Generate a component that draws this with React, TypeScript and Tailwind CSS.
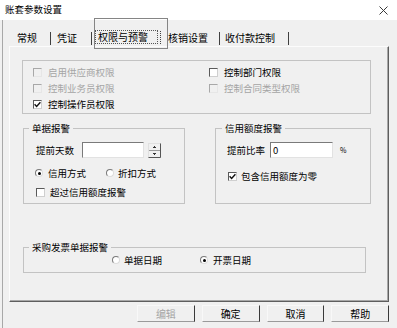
import React from "react";

function Check({ checked = false, disabled = false }: { checked?: boolean; disabled?: boolean }) {
  return (
    <span
      className={
        disabled
          ? "w-[9px] h-[9px] shrink-0 border border-t-[#a8a8a8] border-l-[#a8a8a8] border-r-[#e6e6e6] border-b-[#e6e6e6] bg-[#f0f0f0] flex items-center justify-center"
          : "w-[9px] h-[9px] shrink-0 border border-t-[#5a5a5a] border-l-[#5a5a5a] border-r-[#cfcfcf] border-b-[#cfcfcf] bg-white flex items-center justify-center"
      }
    >
      {checked && (
        <svg width="7" height="7" viewBox="0 0 7 7">
          <path d="M0.6 3.3 L2.6 5.4 L6.4 1.2" stroke="#111" strokeWidth="1.4" fill="none" />
        </svg>
      )}
    </span>
  );
}

function Radio({ checked = false }: { checked?: boolean }) {
  return (
    <span className="w-[8px] h-[8px] shrink-0 rounded-full border border-t-[#7a7a7a] border-l-[#7a7a7a] border-r-[#dcdcdc] border-b-[#dcdcdc] bg-white flex items-center justify-center">
      {checked && <span className="w-[3px] h-[3px] rounded-full bg-black" />}
    </span>
  );
}

function CheckRow({ label, checked, disabled }: { label: string; checked?: boolean; disabled?: boolean }) {
  return (
    <div className="h-[16px] flex items-center gap-[6px]">
      <Check checked={checked} disabled={disabled} />
      <span className={disabled ? "text-[#a5a5a5]" : "text-black"}>{label}</span>
    </div>
  );
}

function Btn({ label, disabled }: { label: string; disabled?: boolean }) {
  return (
    <div
      className={
        "w-[58px] h-[17px] flex items-center justify-center bg-[#f0f0f0] border border-t-[#f8f8f8] border-l-[#f8f8f8] border-r-[#3a3a3a] border-b-[#9a9a9a] text-[10px] leading-none " +
        (disabled ? "text-[#a5a5a5]" : "text-black")
      }
    >
      {label}
    </div>
  );
}

export default function App() {
  return (
    <div className="w-[397px] h-[328px] bg-[#f0f0f0] flex flex-col overflow-hidden font-['Noto_Sans_CJK_SC',sans-serif] text-black text-[9.5px] leading-[12px]">
      {/* title bar */}
      <div className="h-[20px] bg-white flex items-center justify-between pl-[5px] pr-[9px] shrink-0">
        <span className="text-[9.5px] leading-none">账套参数设置</span>
        <svg width="9" height="9" viewBox="0 0 9 9">
          <path d="M0.5 0.5L8.5 8.5M8.5 0.5L0.5 8.5" stroke="#3a3a3a" strokeWidth="1" />
        </svg>
      </div>

      <div className="flex-1 ml-[2px] border-l border-[#a8a8a8] flex flex-col pl-[6px] pr-[8px]">
        {/* tabs */}
        <div className="h-[26px] flex items-start text-[10px] leading-[12px] shrink-0">
          <div className="w-[42px] pl-[8px] pt-[12px] flex justify-between">
            <span>常规</span>
            <span className="w-px h-[13px] bg-[#404040]" />
          </div>
          <div className="w-[41px] pl-[6px] pt-[12px] flex justify-between">
            <span>凭证</span>
            <span className="w-px h-[13px] bg-[#404040]" />
          </div>
          <div className="w-[2px]" />
          <div className="relative z-10 w-[74px] h-[31px] -mt-[2px] border border-[#858585] flex items-start pt-[11px] pl-[0px]">
            <span className="w-[63px] h-[14px] border border-dotted border-[#555] pl-[2px] flex items-center">权限与预警</span>
            <span className="ml-[2px] mt-[1px] w-px h-[13px] border-l border-dotted border-[#404040]" />
          </div>
          <div className="w-[52px] pt-[12px] flex justify-between">
            <span>核销设置</span>
            <span className="w-px h-[13px] bg-[#404040]" />
          </div>
          <div className="w-[69px] pl-[5px] pt-[12px] flex justify-between">
            <span>收付款控制</span>
            <span className="w-px h-[13px] bg-[#404040]" />
          </div>
        </div>

        {/* panel */}
        <div className="h-[256px] w-[380px] border border-t-[#fcfcfc] border-l-[#fcfcfc] border-r-[#5e5e5e] border-b-[#5e5e5e] shadow-[inset_-1px_-1px_0_#a8a8a8] flex flex-col shrink-0">
          {/* group 1 */}
          <div className="ml-[12px] mt-[13px] w-[349px] h-[54px] border border-[#c3c3c3] grid grid-cols-[176px_1fr] pl-[10px] pt-[3px]">
            <div className="flex flex-col">
              <CheckRow label="启用供应商权限" disabled />
              <CheckRow label="控制业务员权限" disabled />
              <CheckRow label="控制操作员权限" checked />
            </div>
            <div className="flex flex-col">
              <CheckRow label="控制部门权限" />
              <CheckRow label="控制合同类型权限" disabled />
            </div>
          </div>

          {/* group 2 & 3 */}
          <div className="ml-[13px] mt-[8px] flex gap-[30px]">
            <fieldset className="w-[162px] h-[82px] border border-[#c3c3c3] flex flex-col">
              <legend className="ml-[5px] px-[3px] leading-[12px]">单据报警</legend>
              <div className="mt-[8px] pl-[12px] h-[16px] flex items-center">
                <span className="w-[38px]">提前天数</span>
                <span className="ml-[8px] w-[62px] h-[16px] bg-white border border-t-[#7a7a7a] border-l-[#7a7a7a] border-r-[#e2e2e2] border-b-[#e2e2e2]" />
                <svg className="ml-[4px]" width="13" height="15" viewBox="0 0 13 15">
                  <rect x="0.5" y="0.5" width="12" height="14" fill="#f0f0f0" stroke="#e0e0e0" />
                  <path d="M12.5 0.5V14.5H0.5" stroke="#555" fill="none" />
                  <path d="M1 7.5H12" stroke="#9a9a9a" />
                  <path d="M5 4.5H8" stroke="#333" />
                  <path d="M6 3.5H7" stroke="#333" />
                  <path d="M5 10.5H8" stroke="#333" />
                  <path d="M6 11.5H7" stroke="#333" />
                </svg>
              </div>
              <div className="mt-[7px] pl-[11px] h-[16px] flex items-center">
                <Radio checked />
                <span className="ml-[5px] w-[58px]">信用方式</span>
                <Radio />
                <span className="ml-[4px]">折扣方式</span>
              </div>
              <div className="mt-[3px] pl-[12px] h-[16px] flex items-center gap-[5px]">
                <Check />
                <span>超过信用额度报警</span>
              </div>
            </fieldset>

            <fieldset className="w-[156px] h-[82px] border border-[#c3c3c3] flex flex-col">
              <legend className="ml-[6px] px-[3px] leading-[12px]">信用额度报警</legend>
              <div className="mt-[8px] pl-[11px] h-[16px] flex items-center">
                <span className="w-[38px]">提前比率</span>
                <span className="ml-[5px] w-[63px] h-[16px] bg-white border border-t-[#7a7a7a] border-l-[#7a7a7a] border-r-[#e2e2e2] border-b-[#e2e2e2] pl-[2px] flex items-center">0</span>
                <span className="ml-[7px] text-[7px] leading-none">%</span>
              </div>
              <div className="mt-[10px] pl-[12px] h-[16px] flex items-center gap-[4px]">
                <Check checked />
                <span>包含信用额度为零</span>
              </div>
            </fieldset>
          </div>

          {/* group 4 */}
          <fieldset className="ml-[13px] mt-[37px] w-[343px] h-[32px] border border-[#c3c3c3] flex flex-col">
            <legend className="ml-[5px] px-[3px] leading-[12px]">采购发票单据报警</legend>
            <div className="pl-[88px] h-[14px] flex items-center">
              <Radio />
              <span className="ml-[4px] w-[76px]">单据日期</span>
              <Radio checked />
              <span className="ml-[5px]">开票日期</span>
            </div>
          </fieldset>
        </div>

        {/* buttons */}
        <div className="mt-[3px] ml-[128px] flex gap-[7px]">
          <Btn label="编辑" disabled />
          <Btn label="确定" />
          <Btn label="取消" />
          <Btn label="帮助" />
        </div>
      </div>
    </div>
  );
}
